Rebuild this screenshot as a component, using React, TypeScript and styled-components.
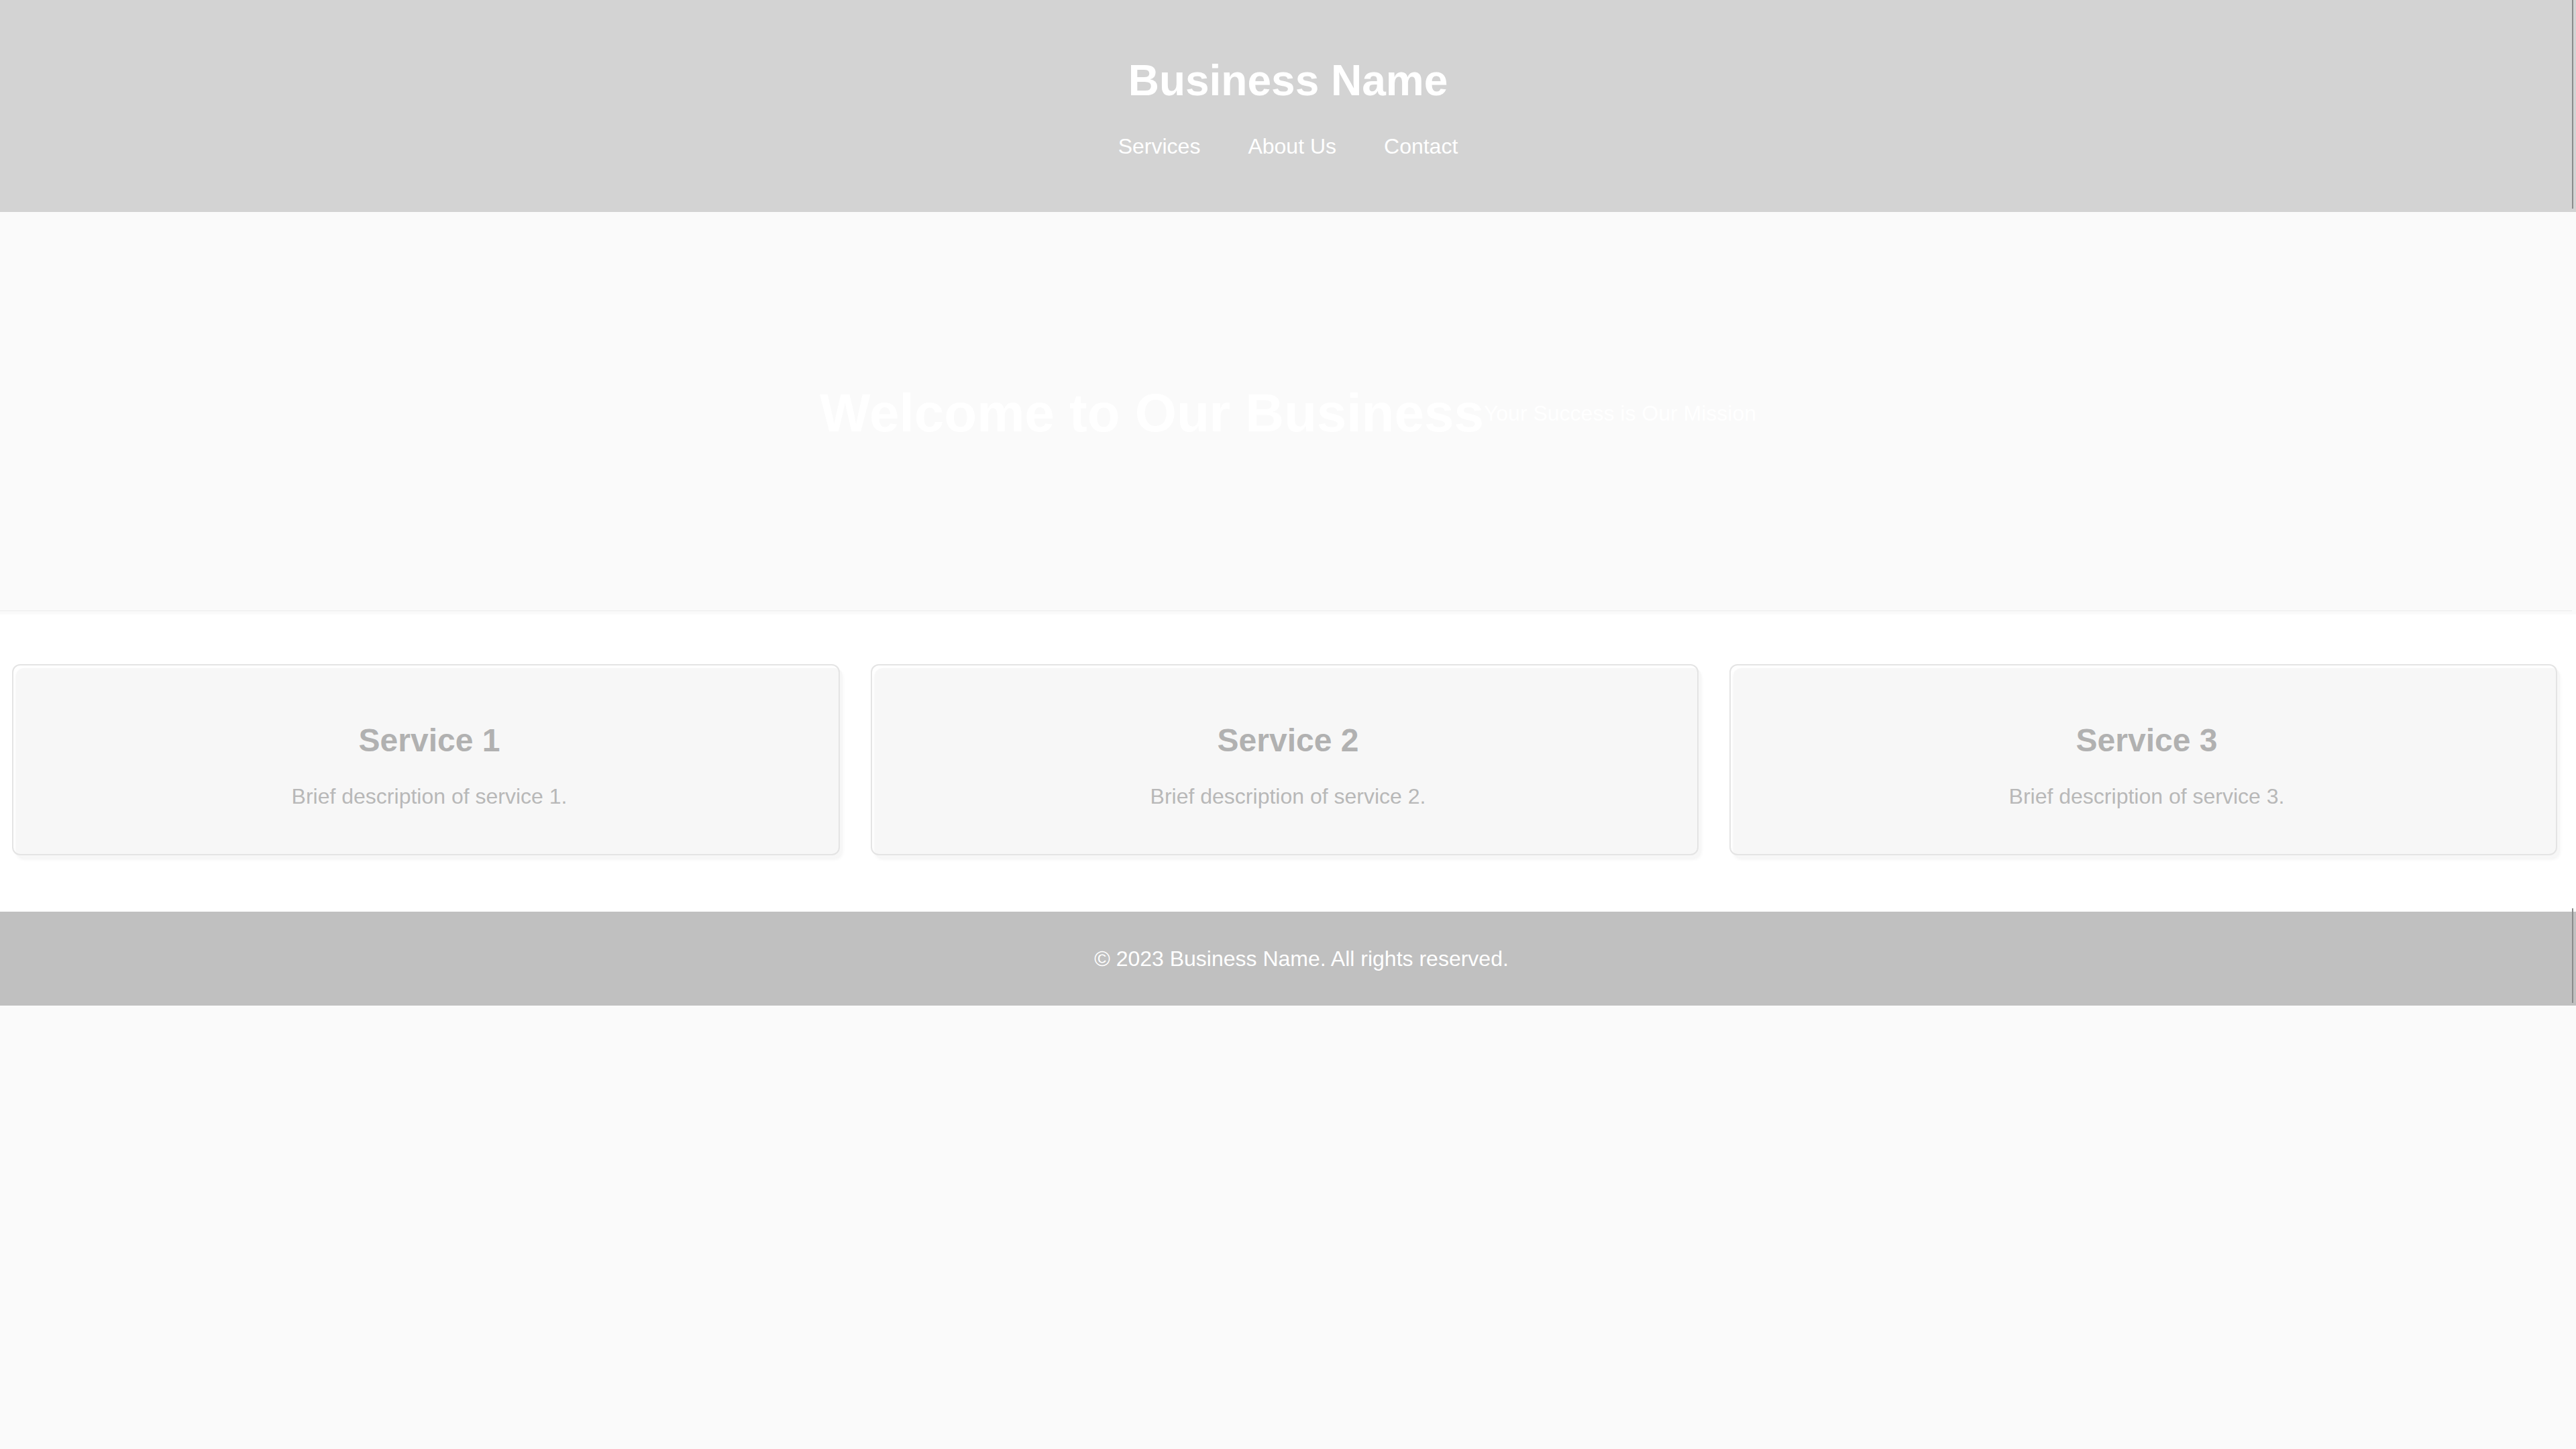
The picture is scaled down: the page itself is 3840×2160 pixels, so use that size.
import React from "react";
import styled, { createGlobalStyle } from "styled-components";

const GlobalStyle = createGlobalStyle`
  html, body {
    margin: 0;
    padding: 0;
    background: #fafafa;
    font-family: "Liberation Sans", Arial, sans-serif;
  }
  * { box-sizing: border-box; }
`;

const Page = styled.div`
  display: flex;
  flex-direction: column;
  width: 100%;
`;

const Header = styled.header`
  position: relative;
  background: #d3d3d3;
  padding: 84px 0 80px;
  display: flex;
  flex-direction: column;
  align-items: center;
  &::after {
    content: "";
    position: absolute;
    right: 4px;
    top: 0;
    bottom: 5px;
    width: 2px;
    background: #8c8c8c;
  }
`;

const Brand = styled.h1`
  margin: 0 0 42px;
  font-size: 64px;
  line-height: 1.15;
  font-weight: 700;
  color: #ffffff;
`;

const Nav = styled.nav`
  display: flex;
  gap: 71px;
`;

const NavLink = styled.a`
  font-size: 32px;
  line-height: 1.15;
  color: #ffffff;
  text-decoration: none;
`;

const Hero = styled.section`
  position: relative;
  height: 600px;
  background: #fafafa;
  display: flex;
  align-items: center;
  justify-content: center;
  &::after {
    content: "";
    position: absolute;
    left: 0;
    right: 6px;
    bottom: 5px;
    height: 1px;
    background: #ececec;
  }
`;

const HeroTitle = styled.h2`
  margin: 0;
  font-size: 80px;
  line-height: 1.15;
  font-weight: 700;
  color: #ffffff;
`;

const HeroTagline = styled.p`
  margin: 0;
  font-size: 32px;
  line-height: 1.15;
  color: #ffffff;
`;

const Services = styled.section`
  background: #ffffff;
  padding: 80px 24px;
  display: grid;
  grid-template-columns: repeat(3, 1fr);
  gap: 48px;
`;

const Card = styled.article`
  position: relative;
  height: 283px;
  background: #f7f7f7;
  border-radius: 12px;
  box-shadow: 0 2px 5px rgba(0, 0, 0, 0.05);
  padding: 80px 24px 74px;
  display: flex;
  flex-direction: column;
  align-items: center;
  gap: 37px;
  &::before {
    content: "";
    position: absolute;
    left: -6px;
    top: -6px;
    right: 4px;
    bottom: 4px;
    border: 2px solid #e4e4e4;
    border-radius: 12px;
    pointer-events: none;
  }
`;

const CardTitle = styled.h3`
  margin: 0;
  font-size: 48px;
  line-height: 1.15;
  font-weight: 700;
  color: #b1b1b1;
`;

const CardText = styled.p`
  margin: 0;
  font-size: 32px;
  line-height: 1.15;
  color: #b8b8b8;
`;

const Footer = styled.footer`
  position: relative;
  height: 140px;
  background: #c0c0c0;
  padding-left: 40px;
  display: flex;
  align-items: center;
  justify-content: center;
  &::after {
    content: "";
    position: absolute;
    right: 4px;
    top: -5px;
    bottom: 4px;
    width: 2px;
    background: #8c8c8c;
  }
`;

const FooterText = styled.p`
  margin: 0;
  font-size: 32px;
  line-height: 1.15;
  color: #ffffff;
`;

const services = [
  { title: "Service 1", text: "Brief description of service 1." },
  { title: "Service 2", text: "Brief description of service 2." },
  { title: "Service 3", text: "Brief description of service 3." },
];

export default function App() {
  return (
    <>
      <GlobalStyle />
      <Page>
        <Header>
          <Brand>Business Name</Brand>
          <Nav>
            <NavLink href="#services">Services</NavLink>
            <NavLink href="#about">About Us</NavLink>
            <NavLink href="#contact">Contact</NavLink>
          </Nav>
        </Header>
        <Hero>
          <HeroTitle>Welcome to Our Business</HeroTitle>
          <HeroTagline>Your Success is Our Mission</HeroTagline>
        </Hero>
        <Services id="services">
          {services.map((s) => (
            <Card key={s.title}>
              <CardTitle>{s.title}</CardTitle>
              <CardText>{s.text}</CardText>
            </Card>
          ))}
        </Services>
        <Footer>
          <FooterText>© 2023 Business Name. All rights reserved.</FooterText>
        </Footer>
      </Page>
    </>
  );
}
